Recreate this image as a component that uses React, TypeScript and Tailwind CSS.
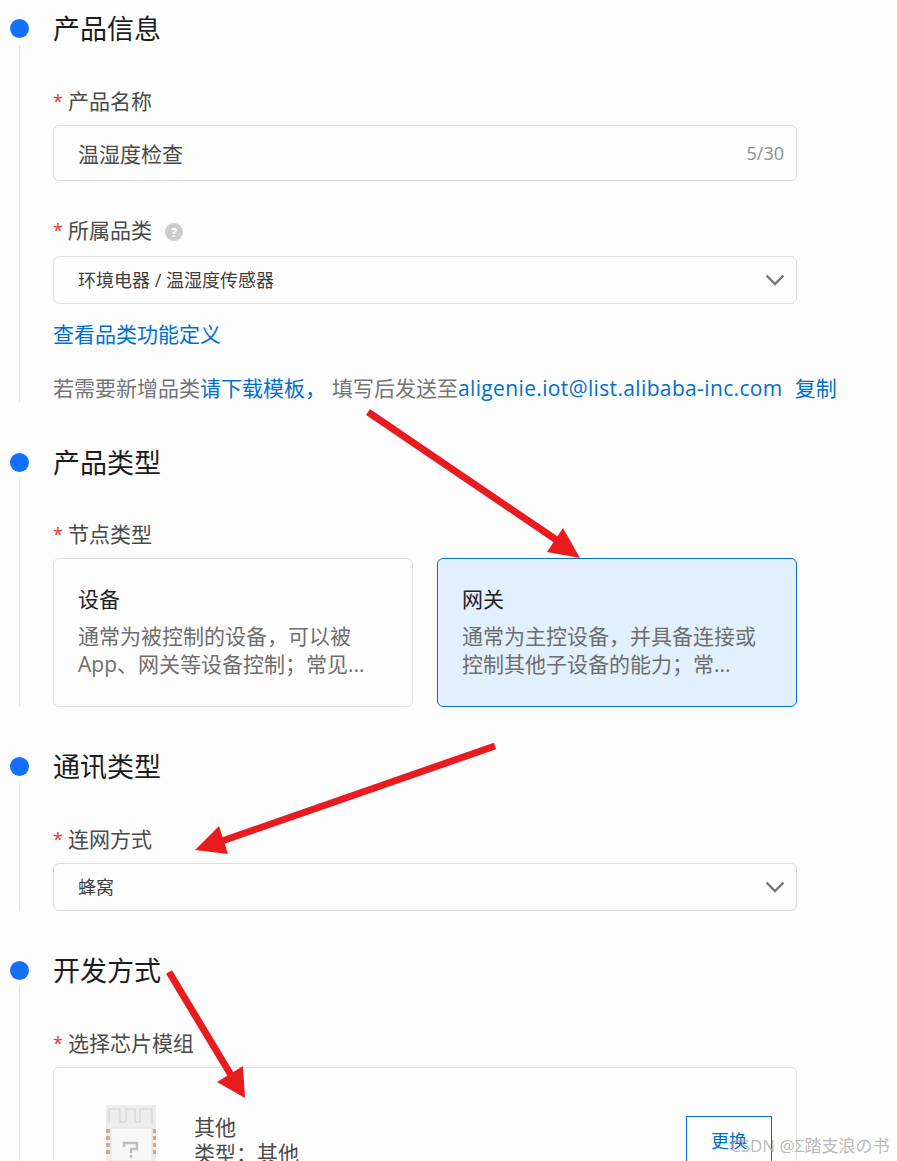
import type { ReactNode } from "react";

const CJK = "font-['Open_Sans','Noto_Sans_CJK_SC',sans-serif]";

function Section({ title, children, gap = "mb-[40px]" }: { title: string; children: ReactNode; gap?: string }) {
  return (
    <section className={`flex ${gap}`}>
      {/* timeline rail */}
      <div className="w-[53px] shrink-0 flex flex-col pl-[10px]">
        <div className="w-[19px] h-[19px] mt-[10px] rounded-full bg-[#1470fb]" />
        <div className="w-px flex-1 mt-[7px] ml-[9px] bg-[#e3e3e3]" />
      </div>
      <div className="w-[744px]">
        <h2 className="h-[40px] text-[27px] leading-[40px] text-[#1c1c1c]">{title}</h2>
        {children}
      </div>
    </section>
  );
}

function Label({ text, help }: { text: string; help?: boolean }) {
  return (
    <div className="flex items-center h-[28px] text-[21px] leading-[28px] text-[#4a4a4a]">
      <span className="w-[15px] text-[#e8352e] text-[18px]">*</span>
      {text}
      {help && (
        <span className="ml-[13px] mt-[4px] w-[18px] h-[18px] rounded-full bg-[#cccccc] text-white text-[13px] leading-[18px] font-bold text-center">
          ?
        </span>
      )}
    </div>
  );
}

function SelectBox({ value }: { value: string }) {
  return (
    <div className="h-[48px] border border-[#dedede] rounded-[6px] flex items-center justify-between pl-[24px] pr-[11px] text-[18px] text-[#3d3d3d]">
      <span>{value}</span>
      <svg width="20" height="12" viewBox="0 0 20 12" fill="none" stroke="#777777" strokeWidth="2.4">
        <path d="M1.5 1.5 L10 10 L18.5 1.5" />
      </svg>
    </div>
  );
}

function NodeCard({ title, lines, active }: { title: string; lines: string[]; active?: boolean }) {
  return (
    <div
      className={
        active
          ? "w-[360px] h-[149px] rounded-[6px] border border-[#0070cc] bg-[#e1f0fc] px-[24px] pt-[26px]"
          : "w-[360px] h-[149px] rounded-[6px] border border-[#e2e2e2] px-[24px] pt-[26px]"
      }
    >
      <div className="text-[21px] leading-[28px] text-[#222222]">{title}</div>
      <div className="mt-[9px] text-[21px] leading-[28px] text-[#6e6e6e] whitespace-nowrap">
        {lines.map((l) => (
          <div key={l}>{l}</div>
        ))}
      </div>
    </div>
  );
}

function ChipIcon() {
  return (
    <svg width="50" height="56" viewBox="0 0 50 56" className="shrink-0">
      <rect x="0" y="0" width="50" height="56" fill="#ececec" />
      {/* antenna trace */}
      <path d="M3 18 V4 H14 V17 H20 V4 H29 V17 H34 V4 H46 V18" fill="none" stroke="#d9d9d9" strokeWidth="1.5" />
      <rect x="5" y="23" width="41" height="33" fill="#f7f7f7" stroke="#e4e4e4" />
      <g fill="#d0ab88">
        <rect x="0" y="24" width="4" height="4" />
        <rect x="0" y="31" width="4" height="4" />
        <rect x="0" y="38" width="4" height="4" />
        <rect x="0" y="45" width="4" height="4" />
        <rect x="47" y="24" width="3" height="4" />
        <rect x="47" y="31" width="3" height="4" />
        <rect x="47" y="38" width="3" height="4" />
        <rect x="47" y="45" width="3" height="4" />
      </g>
      <path d="M18 42 V38 H31 V44 H25 V48 M25 50 V53" fill="none" stroke="#bdbdbd" strokeWidth="2.4" />
    </svg>
  );
}

function Arrows() {
  return (
    <svg width="897" height="1161" viewBox="0 0 897 1161" className="absolute left-0 top-0 pointer-events-none">
      <g fill="#e81c1f" stroke="#e81c1f">
        <path d="M368 412 L558 541" strokeWidth="7" />
        <polygon points="580,558 547,552 563,528" strokeWidth="0" />
        <path d="M495 746 L222 841" strokeWidth="7" />
        <polygon points="195,850 219,826 228,854" strokeWidth="0" />
        <path d="M169 972 L231 1075" strokeWidth="7" />
        <polygon points="245,1098 217,1082 243,1066" strokeWidth="0" />
      </g>
    </svg>
  );
}

export default function App() {
  return (
    <div className={`relative w-[897px] h-[1161px] overflow-hidden bg-[#fdfdfd] pt-[9px] ${CJK}`}>
      <Section title="产品信息" gap="mb-[41px]">
        <div className="mt-[38px]">
          <Label text="产品名称" />
        </div>
        <div className="mt-[10px] h-[56px] border border-[#dedede] rounded-[6px] flex items-center justify-between pl-[24px] pr-[12px]">
          <span className="text-[21px] text-[#4a4a4a] mt-[3px]">温湿度检查</span>
          <span className="text-[18px] text-[#8f8f8f]">5/30</span>
        </div>
        <div className="mt-[35px]">
          <Label text="所属品类" help />
        </div>
        <div className="mt-[12px]">
          <SelectBox value="环境电器 / 温湿度传感器" />
        </div>
        <div className="mt-[16px] h-[28px] text-[21px] leading-[28px] text-[#0070cc]">查看品类功能定义</div>
        <div className="mt-[26px] h-[28px] text-[21px] leading-[28px] text-[#757575] whitespace-nowrap">
          若需要新增品类<span className="text-[#0070cc]">请下载模板，</span>
          <span className="ml-[6px]">填写后发送至</span>
          <span className="text-[#0070cc] tracking-[0.36px]">aligenie.iot@list.alibaba-inc.com</span>
          <span className="ml-[12px] text-[#0070cc]">复制</span>
        </div>
      </Section>

      <Section title="产品类型">
        <div className="mt-[37px]">
          <Label text="节点类型" />
        </div>
        <div className="mt-[10px] flex gap-[24px]">
          <NodeCard title="设备" lines={["通常为被控制的设备，可以被", "App、网关等设备控制；常见..."]} />
          <NodeCard active title="网关" lines={["通常为主控设备，并具备连接或", "控制其他子设备的能力；常..."]} />
        </div>
      </Section>

      <Section title="通讯类型">
        <div className="mt-[38px]">
          <Label text="连网方式" />
        </div>
        <div className="mt-[10px]">
          <SelectBox value="蜂窝" />
        </div>
      </Section>

      <Section title="开发方式" gap="mb-0">
        <div className="mt-[38px]">
          <Label text="选择芯片模组" />
        </div>
        <div className="mt-[10px] h-[140px] border border-[#e2e2e2] rounded-[6px] flex items-start pl-[52px] pr-[24px] pt-[37px]">
          <ChipIcon />
          <div className="ml-[38px] mt-[9px] text-[21px] leading-[26px] text-[#4a4a4a]">
            <div>其他</div>
            <div>类型：其他</div>
          </div>
          <div className="ml-auto mt-[11px] w-[86px] h-[50px] border border-[#0070cc] text-[#0070cc] text-[18px] flex items-center justify-center">
            更换
          </div>
        </div>
      </Section>

      <Arrows />
      <div className="absolute left-[730px] top-[1134px] text-[17px] leading-[24px] text-[#a8a8a8]/80 whitespace-nowrap">
        CSDN @Σ踏支浪の书
      </div>
    </div>
  );
}
